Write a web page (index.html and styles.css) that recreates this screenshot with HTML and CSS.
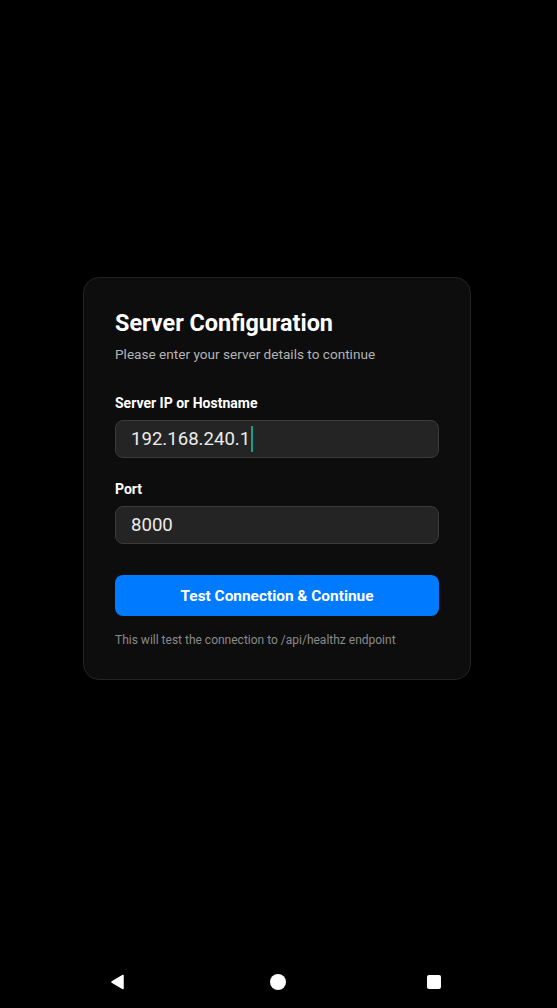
FILE: index.html
```html
<!DOCTYPE html>
<html lang="en">
<head>
<meta charset="utf-8">
<title>Server Configuration</title>
<link rel="stylesheet" href="styles.css">
</head>
<body>
<div class="screen">
  <main class="main">
    <section class="card">
      <h1 class="title">Server Configuration</h1>
      <p class="subtitle">Please enter your server details to continue</p>
      <div class="field">
        <label class="label">Server IP or Hostname</label>
        <div class="input"><span class="value">192.168.240.1</span><span class="caret"></span></div>
      </div>
      <div class="field">
        <label class="label">Port</label>
        <div class="input"><span class="value">8000</span></div>
      </div>
      <button class="button">Test Connection &amp; Continue</button>
      <p class="hint">This will test the connection to /api/healthz endpoint</p>
    </section>
  </main>
  <nav class="navbar">
    <svg class="nav-icon" width="16" height="16" viewBox="0 0 16 16"><path d="M13 1.5 L13 14.5 L2 8 Z" fill="#fff" stroke="#fff" stroke-width="1.5" stroke-linejoin="round"/></svg>
    <svg class="nav-icon" width="18" height="18" viewBox="0 0 18 18"><circle cx="9" cy="9" r="8" fill="#fff"/></svg>
    <svg class="nav-icon" width="16" height="16" viewBox="0 0 16 16"><rect x="1" y="1" width="14" height="14" rx="2" fill="#fff"/></svg>
  </nav>
</div>
</body>
</html>
```
FILE: styles.css
```css
* { box-sizing: border-box; }
html, body { margin: 0; padding: 0; background: #000; }
body { font-family: Roboto, "Noto Sans", sans-serif; color: #fff; }
.screen { width: 557px; height: 1008px; display: flex; flex-direction: column; }
.main { flex: 1; display: flex; align-items: center; justify-content: center; padding: 0 3px 3px 0; }
.card {
  width: 388px;
  background: #0d0d0d;
  border: 1px solid #232323;
  border-radius: 16px;
  padding: 31px 31px 31px;
  display: flex;
  flex-direction: column;
}
.title { margin: 0; font-size: 23.4px; line-height: 28px; font-weight: 700; }
.subtitle { margin: 7px 0 0; font-size: 13.6px; line-height: 20px; color: #b3b3b3; }
.field { display: flex; flex-direction: column; margin-top: 30px; }
.field + .field { margin-top: 22px; }
.label { font-size: 14px; line-height: 18px; font-weight: 700; margin-bottom: 8px; }
.input {
  height: 38px;
  background: #242424;
  border: 1px solid #3a3a3a;
  border-radius: 8px;
  padding: 0 15px;
  display: flex;
  align-items: center;
  font-size: 18.6px;
  color: #ececec;
}
.caret { width: 2px; height: 26px; background: #1a9e8c; margin-left: 1px; }
.button {
  margin-top: 31px;
  height: 41px;
  border: none;
  border-radius: 8px;
  background: #007aff;
  color: #fff;
  font-family: Roboto, sans-serif;
  font-size: 15.4px;
  font-weight: 700;
}
.hint { margin: 16px 0 0; font-size: 12px; line-height: 16px; color: #8a8a8a; }
.navbar { height: 48px; display: flex; align-items: center; padding-bottom: 4px; }
.nav-icon { display: block; }
.nav-icon:nth-child(1) { margin-left: 110px; }
.nav-icon:nth-child(2) { margin-left: 143px; }
.nav-icon:nth-child(3) { margin-left: 139px; }
```
